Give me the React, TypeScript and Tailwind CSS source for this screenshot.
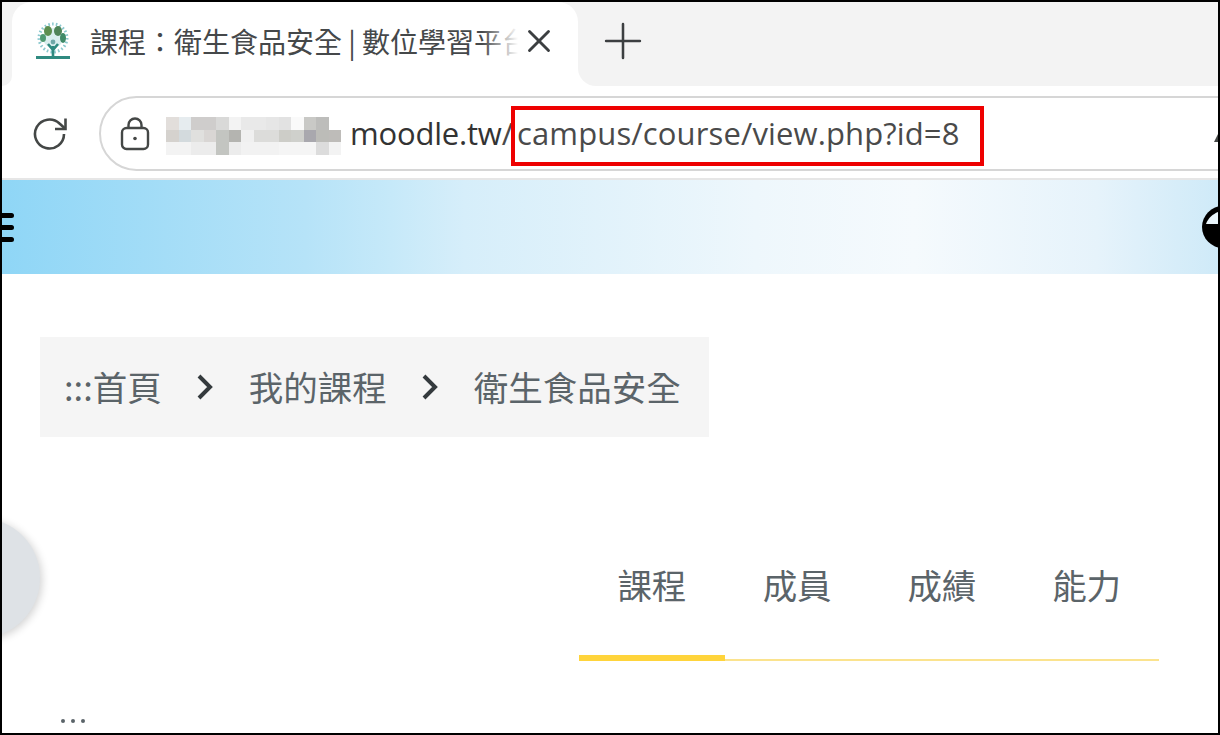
import { X, Plus } from "lucide-react";

const mosaic = [
  ["#e2dedb", "#e6ecef", "#cfcdcc", "#cfcdcc", "#d9d9d8", "#f3f3f3", "#e9e9e9", "#e9e9e9", "#e6e6e6", "#e2e2e2", "#fafafa", "#c9c9c6", "#bdbdbb", "#ffffff"],
  ["#d5d2ce", "#d3dadd", "#e0e0de", "#d9d6d4", "#c3c5c1", "#b4b4b0", "#f0f0f0", "#dcdcda", "#dcdcda", "#cdcdc8", "#cfd0cc", "#a9a8ae", "#bcbcb8", "#bebcb9"],
  ["#f3f3f3", "#f3f3f3", "#ececec", "#ececec", "#c3c5c1", "#ececec", "#f2f2f2", "#f2f2f2", "#f2f2f2", "#f5f5f5", "#f5f5f5", "#f5f5f5", "#dcdcdc", "#f3f3f3"],
];

const crumbs = ["我的課程", "衛生食品安全"];
const tabs = ["課程", "成員", "成績", "能力"];

function Favicon() {
  return (
    <svg width="34" height="38" viewBox="0 0 34 38" className="shrink-0">
      <circle cx="17" cy="16" r="14" fill="none" stroke="#8cc9cf" strokeWidth="3" strokeDasharray="1.6 2.2" />
      <circle cx="17" cy="16" r="10" fill="#d9eeee" />
      <rect x="0" y="34" width="34" height="3" fill="#2f8a80" />
      <path d="M17 34V24M17 28L12 22M17 28L22 22" stroke="#2f8a80" strokeWidth="2.6" fill="none" />
      <ellipse cx="12" cy="9" rx="4" ry="5" fill="#5d8f4f" />
      <ellipse cx="22" cy="9" rx="4" ry="5" fill="#4f8458" />
      <ellipse cx="7" cy="16" rx="3" ry="4" fill="#4f9a72" />
      <ellipse cx="27" cy="16" rx="3" ry="5" fill="#3f8a68" />
      <circle cx="17" cy="20" r="2.4" fill="#6fa8a8" />
    </svg>
  );
}

function ReloadIcon() {
  return (
    <svg width="38" height="38" viewBox="0 0 38 38" fill="none" stroke="#444746" strokeWidth="2.6">
      <path d="M32 19a14.5 14.5 0 1 1-4.5-10.5L33 13.5" />
      <path d="M33.5 3.5V14H23" />
    </svg>
  );
}

function LockIcon() {
  return (
    <svg width="30" height="34" viewBox="0 0 30 34" fill="none" stroke="#444746" strokeWidth="2.4">
      <rect x="2" y="11" width="26" height="21" rx="4.5" />
      <path d="M8.5 11V8a6.5 6.5 0 0 1 13 0v3" />
      <circle cx="15" cy="21.5" r="1.8" fill="#444746" stroke="none" />
    </svg>
  );
}

export default function App() {
  return (
    <div className="relative w-[1220px] h-[735px] overflow-hidden bg-white border-2 border-black font-['Noto_Sans_CJK_TC',sans-serif]">
      {/* tab strip */}
      <div className="flex h-[84px]">
        <div className="w-[10px] bg-[#f3f3f3] rounded-br-[18px] shrink-0" />
        <div className="bg-[#f3f3f3] shrink-0">
          <div className="flex items-center w-[566px] h-[84px] bg-white rounded-t-[20px] pl-[24px] pb-[6px]">
            <Favicon />
            <div className="relative w-[428px] ml-[20px] overflow-hidden whitespace-nowrap text-[28px] leading-[40px] text-[#45484a]">
              課程：衛生食品安全 | 數位學習平台
              <div className="absolute right-0 top-0 h-full w-[36px] bg-gradient-to-r from-transparent to-white" />
            </div>
            <X size={38} strokeWidth={1.8} color="#3c3f41" className="ml-[2px] shrink-0" />
          </div>
        </div>
        <div className="flex-1 bg-[#f3f3f3] rounded-bl-[18px] pl-[16px] pt-[10px]">
          <Plus size={58} strokeWidth={1.05} color="#3c3f41" />
        </div>
      </div>

      {/* toolbar */}
      <div className="relative flex items-center h-[94px] pl-[30px] pt-[3px] border-b-2 border-[#e6e6e6]">
        <ReloadIcon />
        <div className="flex items-center h-[75px] ml-[29px] flex-1 -mr-[40px] rounded-l-full border-2 border-[#d6d6d6] pl-[19px] font-['Open_Sans',sans-serif] text-[31px] text-[#4a4a4a] whitespace-nowrap">
          <LockIcon />
          <div className="flex flex-col ml-[16px] w-[175px] shrink-0 mt-[5px]">
            {mosaic.map((row, i) => (
              <div key={i} className="flex">
                {row.map((c, j) => (
                  <div key={j} className="w-[12.5px] h-[12.5px]" style={{ backgroundColor: c }} />
                ))}
              </div>
            ))}
          </div>
          <span className="ml-[9px] text-[#333] tracking-[-0.2px]">moodle.tw</span>
          <span>/</span>
          <span className="ml-[4px] tracking-[0.13px]">campus/course/view.php?id=8</span>
        </div>
        {/* highlight box */}
        <div className="absolute left-[509px] top-[20px] w-[473px] h-[60px] border-[4px] border-[#ee0000]" />
        <div className="absolute right-0 top-[48px] w-0 h-0 border-l-[4px] border-b-[8px] border-l-transparent border-b-[#444746]" />
      </div>

      {/* banner */}
      <div className="flex items-center justify-between h-[94px] bg-[linear-gradient(90deg,#8fd6f6_0%,#b6e3f8_25%,#c6e9f9_32%,#d6eefa_38%,#eef7fc_62%,#f5fafd_75%,#e6f3fb_90%,#cfeaf8_100%)] overflow-hidden">
        <div className="flex flex-col gap-[7px] w-[12px]">
          <div className="h-[5px] bg-black rounded-r-full" />
          <div className="h-[5px] bg-black rounded-r-full" />
          <div className="h-[5px] bg-black rounded-r-full" />
        </div>
        <svg width="16" height="42" viewBox="0 0 16 42" className="mt-[-1px]">
          <circle cx="21" cy="21" r="21" fill="#000" />
          <path d="M4 18C6 12 11 8 16 6V18Z" fill="#e9f5fb" />
        </svg>
      </div>

      {/* breadcrumb */}
      <div className="flex items-center w-[669px] h-[100px] mt-[63px] ml-[38px] bg-[#f5f5f5] pl-[24px] text-[34.5px] text-[#5b6469] whitespace-nowrap">
        <span>:::首頁</span>
        {crumbs.map((c) => (
          <div key={c} className="flex items-center">
            <svg width="20" height="28" viewBox="0 0 20 28" fill="none" stroke="#343a3d" strokeWidth="4" className="ml-[33px] mr-[34px]">
              <path d="M4 3l11 11L4 25" />
            </svg>
            <span>{c}</span>
          </div>
        ))}
      </div>

      {/* side button */}
      <div className="absolute left-[-82px] top-[516px] w-[120px] h-[120px] rounded-full bg-[#dee2e6] shadow-[2px_2px_8px_rgba(0,0,0,0.18)]" />

      {/* course tabs */}
      <div className="flex w-[580px] ml-[577px] mt-[117px] border-b-2 border-[#fbe38e] text-[34.5px] leading-[50px] text-[#5b6469]">
        {tabs.map((t, i) => (
          <div key={t} className={i === 0 ? "flex justify-center w-[146px] h-[107px] pt-[5px] -mb-[2px] border-b-[6px] border-[#ffd43b]" : "flex justify-center w-[145px] h-[105px] pt-[5px]"}>
            {t}
          </div>
        ))}
      </div>

      <div className="flex gap-[6px] ml-[59px] mt-[58px]">
        <div className="w-[4px] h-[4px] rounded-full bg-[#5b6469]" />
        <div className="w-[4px] h-[4px] rounded-full bg-[#5b6469]" />
        <div className="w-[4px] h-[4px] rounded-full bg-[#5b6469]" />
      </div>
    </div>
  );
}
